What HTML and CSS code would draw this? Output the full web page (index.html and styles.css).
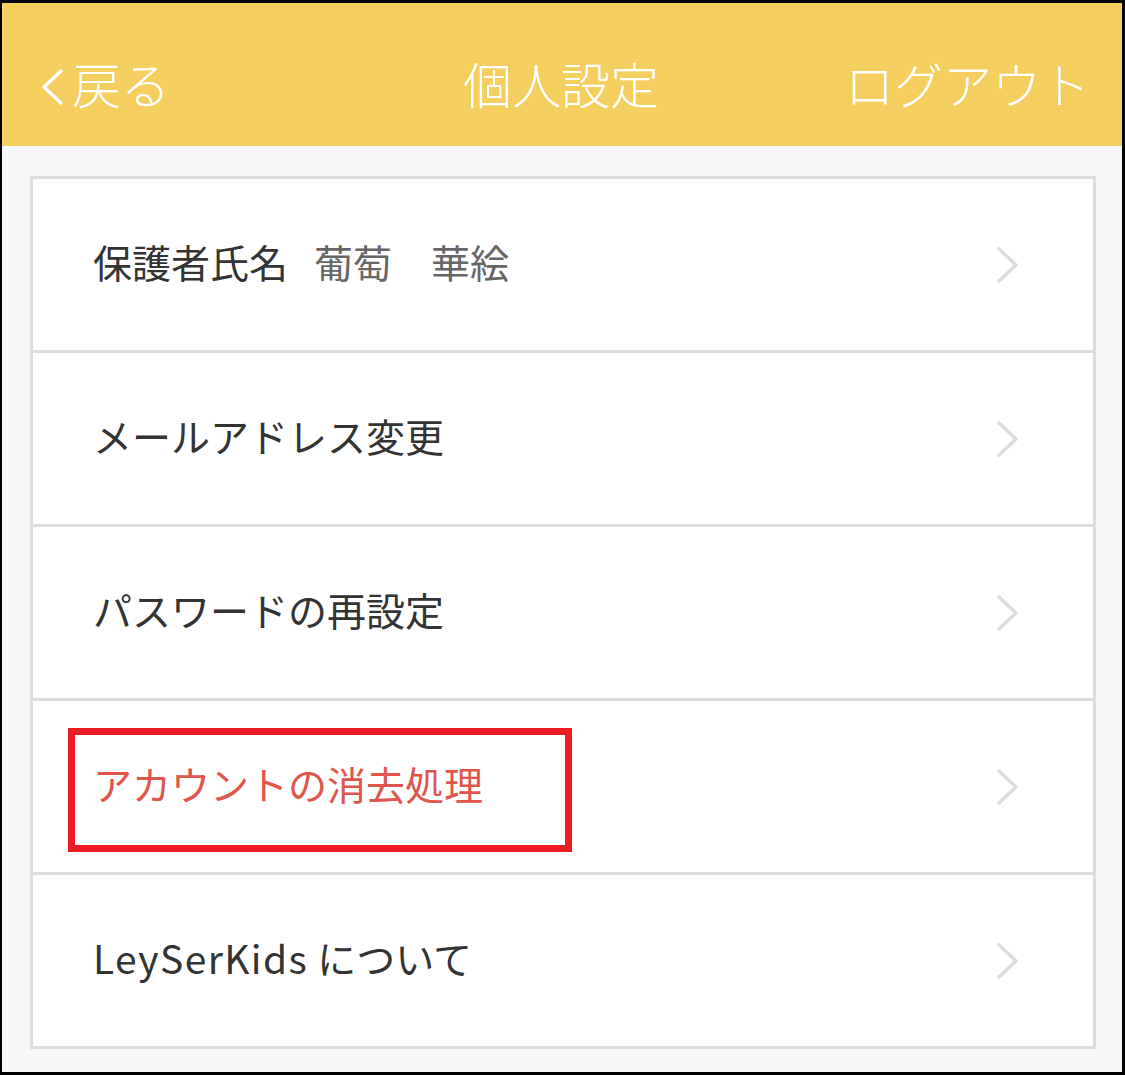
FILE: index.html
```html
<!DOCTYPE html>
<html lang="ja">
<head>
<meta charset="utf-8">
<link rel="stylesheet" href="styles.css">
</head>
<body>
<div class="screen">
  <header class="nav">
    <div class="nav-left">
      <svg class="back-icon" width="26" height="38" viewBox="0 0 26 38"><polyline points="22,3 5,19 22,35" fill="none" stroke="#fff" stroke-width="3.4" stroke-linecap="round" stroke-linejoin="round"/></svg>
      <span class="nav-text">戻る</span>
    </div>
    <div class="nav-title"><span class="nav-text">個人設定</span></div>
    <div class="nav-right"><span class="nav-text">ログアウト</span></div>
  </header>
  <div class="card">
    <div class="row">
      <span class="text"><span class="label">保護者氏名</span><span class="value">葡萄　華絵</span></span>
      <svg class="chev" width="26" height="40" viewBox="0 0 26 40"><polyline points="4,4 21,20 4,36" fill="none" stroke="#dddddd" stroke-width="3.6" stroke-linecap="round" stroke-linejoin="round"/></svg>
    </div>
    <div class="row">
      <span class="text">メールアドレス変更</span>
      <svg class="chev" width="26" height="40" viewBox="0 0 26 40"><polyline points="4,4 21,20 4,36" fill="none" stroke="#dddddd" stroke-width="3.6" stroke-linecap="round" stroke-linejoin="round"/></svg>
    </div>
    <div class="row">
      <span class="text">パスワードの再設定</span>
      <svg class="chev" width="26" height="40" viewBox="0 0 26 40"><polyline points="4,4 21,20 4,36" fill="none" stroke="#dddddd" stroke-width="3.6" stroke-linecap="round" stroke-linejoin="round"/></svg>
    </div>
    <div class="row">
      <span class="text danger">アカウントの消去処理</span>
      <div class="highlight"></div>
      <svg class="chev" width="26" height="40" viewBox="0 0 26 40"><polyline points="4,4 21,20 4,36" fill="none" stroke="#dddddd" stroke-width="3.6" stroke-linecap="round" stroke-linejoin="round"/></svg>
    </div>
    <div class="row">
      <span class="text"><span class="latin">LeySerKids</span><span class="jp-after">について</span></span>
      <svg class="chev" width="26" height="40" viewBox="0 0 26 40"><polyline points="4,4 21,20 4,36" fill="none" stroke="#dddddd" stroke-width="3.6" stroke-linecap="round" stroke-linejoin="round"/></svg>
    </div>
  </div>
</div>
</body>
</html>
```
FILE: styles.css
```css
* { box-sizing: border-box; }
html, body { margin: 0; padding: 0; background: #000; }
body {
  font-family: "Noto Sans CJK JP", "Noto Sans", sans-serif;
  width: 1125px;
  height: 1075px;
  padding: 3px 3px 3px 2px;
}
.screen {
  width: 1120px;
  height: 1069px;
  background: #f7f7f7;
  overflow: hidden;
}
.nav {
  height: 143px;
  background: #f5ce60;
  color: #fff;
  display: flex;
  align-items: center;
  justify-content: space-between;
  padding: 24px 32px 0 37px;
  font-size: 49px;
  font-weight: 300;
  line-height: 1;
  position: relative;
}
.nav-text {
  display: block;
  margin-bottom: 9px;
}
.nav-left {
  display: flex;
  align-items: center;
  gap: 7px;
}
.back-icon { display: block; }
.nav-title {
  position: absolute;
  left: 0;
  right: 0;
  top: 24px;
  bottom: 0;
  display: flex;
  align-items: center;
  justify-content: center;
  padding-right: 2px;
  pointer-events: none;
}
.card {
  margin: 30px 26px 0 28px;
  height: 873px;
  background: #fff;
  border: 3px solid #dddddd;
}
.row {
  height: 174px;
  border-top: 3px solid #dddddd;
  display: flex;
  align-items: center;
  padding: 0 72px 0 60px;
  font-size: 39px;
  color: #333;
  position: relative;
}
.row:first-child {
  height: 171px;
  border-top: none;
}
.text {
  white-space: nowrap;
  margin-bottom: 8px;
}
.value {
  color: #666;
  margin-left: 26px;
  white-space: pre;
}
.latin { letter-spacing: 1.4px; }
.jp-after { margin-left: 9px; }
.danger { color: #e0554c; }
.chev {
  display: block;
  margin-left: auto;
}
.highlight {
  position: absolute;
  left: 35px;
  top: 27px;
  width: 504px;
  height: 124px;
  border: 7px solid #ed1c24;
}
```
